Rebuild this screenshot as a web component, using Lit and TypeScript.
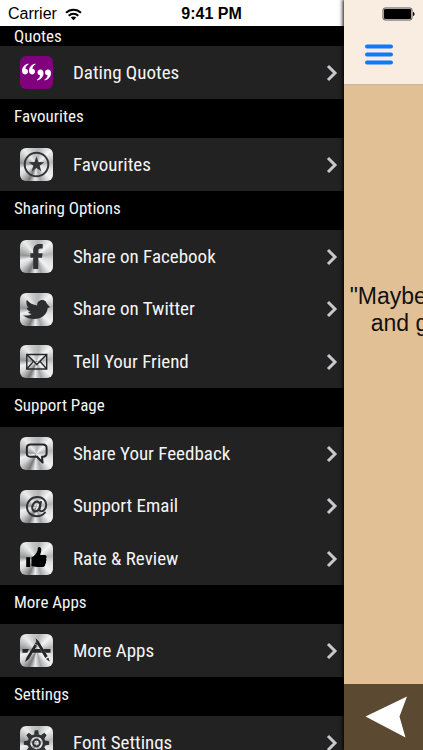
import { LitElement, html, svg, css, nothing } from "lit";
import { customElement, property } from "lit/decorators.js";

type Item = { icon: string; label: string };
type Section = { title: string; items: Item[] };

const SECTIONS: Section[] = [
  { title: "Quotes", items: [{ icon: "quotes", label: "Dating Quotes" }] },
  { title: "Favourites", items: [{ icon: "star", label: "Favourites" }] },
  {
    title: "Sharing Options",
    items: [
      { icon: "facebook", label: "Share on Facebook" },
      { icon: "twitter", label: "Share on Twitter" },
      { icon: "mail", label: "Tell Your Friend" },
    ],
  },
  {
    title: "Support Page",
    items: [
      { icon: "feedback", label: "Share Your Feedback" },
      { icon: "at", label: "Support Email" },
      { icon: "thumb", label: "Rate & Review" },
    ],
  },
  { title: "More Apps", items: [{ icon: "apps", label: "More Apps" }] },
  { title: "Settings", items: [{ icon: "gear", label: "Font Settings" }] },
];

const GEAR_ANGLES = [0, 45, 90, 135, 180, 225, 270, 315];

const GLYPHS: Record<string, unknown> = {
  quotes: svg`
    <g fill="#fff">
      <path d="M8.3 7.6C4.600 8.600 2 11.300 2 14.800C2 17 3.200 18.400 5 18.400C6.700 18.400 8 17.200 8 15.500C8 13.900 6.900 12.800 5.400 12.800C5.600 10.900 6.600 9.400 8.600 8.300Z"/>
      <path d="M15.300 7.600C11.600 8.600 9 11.300 9 14.800C9 17 10.200 18.400 12 18.400C13.700 18.400 15 17.200 15 15.500C15 13.900 13.900 12.800 12.400 12.800C12.600 10.900 13.600 9.400 15.600 8.300Z"/>
      <path d="M17.200 24.400C20.900 23.400 23.500 20.700 23.500 17.200C23.500 15 22.300 13.600 20.500 13.600C18.800 13.600 17.500 14.800 17.500 16.500C17.500 18.100 18.600 19.200 20.100 19.200C19.900 21.100 18.900 22.600 16.900 23.700Z"/>
      <path d="M24.700 24.400C28.400 23.400 31 20.700 31 17.200C31 15 29.800 13.600 28 13.600C26.300 13.600 25 14.800 25 16.500C25 18.100 26.100 19.200 27.600 19.200C27.400 21.100 26.400 22.600 24.400 23.700Z"/>
    </g>`,
  star: svg`
    <circle cx="16.500" cy="16.500" r="11.800" fill="none" stroke="#333638" stroke-width="2"/>
    <path fill="#333638" d="M16.500 8.600L18.500 14L24.300 14.200L19.700 17.700L21.300 23.200L16.500 20L11.700 23.200L13.300 17.700L8.700 14.200L14.500 14Z"/>`,
  facebook: svg`
    <path fill="#303234" d="M13.200 29V17.700H10.400V13.300H13.200V10.400C13.200 6.300 15.600 4 19.400 4H22.700V8.500H20.500C18.900 8.500 18.300 9.200 18.300 10.700V13.300H22.600L22 17.700H18.300V29Z"/>`,
  twitter: svg`
    <path fill="#2b2d2f" d="M6.800 6.700C9.500 10 13 12 17.200 12.400C16.900 9.200 19.200 6.900 22.200 6.900C23.700 6.900 25 7.500 25.900 8.500L26.800 10.500L30 14.200L27.700 15C27.200 21.500 21.500 26 14.500 26C10 26 6.400 25 3 22.200C6.800 22.900 9.500 22.500 11.700 21C9.400 20.800 8.800 20 8.200 18.700L10.400 18.600C8 17.700 7 16.500 6.600 14.600L8.500 14.900C6.700 13 5.700 9.500 6.800 6.700Z"/>`,
  mail: svg`
    <g fill="none" stroke="#242628" stroke-width="1.400">
      <path d="M6.800 9.500H26.700V24H6.800Z"/>
      <path d="M6.800 9.500L16.800 19.400L26.700 9.500"/>
      <path d="M6.800 24L13.500 16.400M26.700 24L20 16.400"/>
    </g>`,
  feedback: svg`
    <path fill="none" stroke="#242628" stroke-width="2" stroke-linejoin="round" d="M10.500 7.500H22.800C25.600 7.500 26.600 8.800 26.600 11V16.300C26.600 18.600 25.400 19.700 23 19.700H22L22.600 25.500L17 19.700H10.500C7.900 19.700 6.800 18.600 6.800 16.300V11C6.800 8.700 8 7.500 10.500 7.500Z"/>`,
  at: svg`
    <g fill="none" stroke="#303234" stroke-linecap="round">
      <path stroke-width="2" d="M24.900 22.600C22.800 25 20 26.200 16.600 26.200C10.800 26.200 7 22.300 7 17C7 11.300 11.300 7.100 17.300 7.100C22.700 7.100 26.200 10.400 26.200 14.700C26.200 18.500 23.900 21.200 21.400 21.200C19.700 21.200 19.200 20.100 19.600 18.300L21 11.900"/>
      <ellipse cx="16.200" cy="16.500" rx="3.700" ry="5" transform="rotate(22 16.200 16.500)" stroke-width="2.200"/>
    </g>`,
  thumb: svg`
    <path fill="#000" d="M6.200 15.200H10.200V25H6.200ZM11.400 15.500C14.500 14 16.700 11.500 17.500 8.500C17.700 6.500 18 4.900 19 4.900C21.200 4.900 21.600 7.200 21 9.700L20.200 13H24.700C26.200 13 26.700 14 26.600 15.100C26.500 16 26 16.400 26 16.400C26.800 17.300 26.600 18.600 25.900 19.300C26.400 20.400 26 21.400 25.200 22C25.400 23.800 24.500 24.900 22.600 24.900H17C14.700 24.900 13.500 24 11.400 23.900Z"/>`,
  apps: svg`
    <g fill="#242628">
      <path d="M2.500 15H8.900L7.300 18.800H2.500ZM13.600 15H20L22 18.800H11.400ZM23.400 15H30.500V18.800H25.500Z"/>
      <path d="M14.600 10.300L16.900 11.700L8.900 25.100L5 28L6.500 23.500Z"/>
      <path d="M15.500 4.300L18.700 7.300L27.700 22.300L25.200 23.900L16.500 8.700ZM26 25L28.400 23.700L29.800 27.800Z"/>
      <path d="M14.900 9.500L15.700 8.200L18 9.700L17.200 11Z"/>
    </g>`,
  gear: svg`
    <g fill="#303234">
      ${GEAR_ANGLES.map(
        (a) => svg`<path transform="rotate(${a} 16.500 17)" d="M14.100 8.500L14.800 4.300H18.200L18.900 8.500Z"/>`
      )}
    </g>
    <circle cx="16.500" cy="17" r="7.700" fill="none" stroke="#303234" stroke-width="2.800"/>
    <circle cx="16.500" cy="17" r="3.400" fill="none" stroke="#303234" stroke-width="2"/>`,
};

@customElement("menu-row")
class MenuRow extends LitElement {
  @property() icon = "";
  @property() label = "";

  static styles = css`
    :host {
      display: block;
    }
    .row {
      display: flex;
      align-items: center;
      width: 100%;
      height: 100%;
      padding: 0 6px 0 20px;
      border: 0;
      background: #222;
      color: #f4f4f4;
      font: 19px/24px "Roboto Condensed", "Liberation Sans Narrow", "Liberation Sans", sans-serif;
      text-align: left;
      cursor: pointer;
    }
    .tile {
      flex: none;
      width: 33px;
      height: 33px;
      margin-right: 20px;
      border-radius: 6px;
      background: conic-gradient(
        from 10deg,
        #b4b6b8, #f4f4f4 35deg, #b4b6b8 70deg, #dedfe0 95deg, #f2f2f2 125deg,
        #a2a4a6 155deg, #ececec 175deg, #77797b 195deg, #d8d8d8 225deg,
        #f0f0f0 245deg, #929496 265deg, #ececec 310deg, #c4c6c8 335deg, #b4b6b8
      );
    }
    .purple {
      background: #80007e;
    }
    .glyph {
      display: block;
    }
    .label {
      flex: 1;
      white-space: nowrap;
    }
  `;

  render() {
    return html`<button class="row" type="button">
      <span class="tile ${this.icon === "quotes" ? "purple" : ""}">
        <svg class="glyph" width="33" height="33" viewBox="0 0 33 33" aria-hidden="true">
          ${GLYPHS[this.icon] ?? nothing}
        </svg>
      </span>
      <span class="label">${this.label}</span>
      <svg width="12" height="18" viewBox="0 0 12 18" aria-hidden="true">
        <path d="M2 2L9 9L2 16" fill="none" stroke="#c9c9cc" stroke-width="3" />
      </svg>
    </button>`;
  }
}

@customElement("app-root")
class AppRoot extends LitElement {
  static styles = css`
    :host {
      display: block;
      font-family: "Liberation Sans", sans-serif;
    }
    .screen {
      position: relative;
      display: flex;
      height: 100vh;
      overflow: hidden;
      background: #000;
    }
    .status {
      position: absolute;
      z-index: 2;
      inset: 0 0 auto 0;
      display: grid;
      grid-template-columns: 1fr auto 1fr;
      align-items: center;
      height: 28px;
      padding: 0 8px;
      color: #000;
      font-size: 16px;
      line-height: 28px;
    }
    .carrier {
      display: flex;
      align-items: center;
      gap: 8px;
    }
    .time {
      font-weight: bold;
    }
    .battery {
      justify-self: end;
    }
    .drawer {
      display: flex;
      flex-direction: column;
      width: 81.25%;
      flex: none;
    }
    .strip {
      flex: none;
      height: 26px;
      background: #fff;
    }
    .menu {
      flex: 1;
      min-height: 0;
      overflow: hidden;
    }
    .title {
      height: 39px;
      margin: 0;
      padding: 7px 14px 0;
      box-sizing: border-box;
      color: #f4f4f4;
      font: 17px/20px "Roboto Condensed", "Liberation Sans Narrow", "Liberation Sans", sans-serif;
    }
    .group:first-child .title {
      height: 20px;
      padding-top: 0;
    }
    .entry {
      height: 53px;
    }
    .entry:nth-of-type(2) {
      height: 52px;
    }
    .panel {
      position: relative;
      flex: 1;
      min-width: 0;
      display: flex;
      flex-direction: column;
      background: #e2c096;
      box-shadow: 0 0 4px 1px #000;
    }
    .bar {
      display: flex;
      align-items: center;
      height: 85px;
      padding: 26px 17px 2px;
      box-sizing: border-box;
      background: #f9ede2;
      border-bottom: 1px solid #c9b5a0;
    }
    .icon-button {
      display: flex;
      padding: 4px;
      border: 0;
      background: none;
      cursor: pointer;
    }
    .quote {
      flex: 1;
      margin: 0;
      padding: 198px 0 0 6px;
      overflow: hidden;
      white-space: nowrap;
      color: #111;
      font-size: 23px;
      line-height: 27px;
    }
    .second {
      display: block;
      padding-left: 21px;
    }
    .footer {
      display: flex;
      align-items: center;
      height: 66px;
      padding-left: 17px;
      background: #5b4932;
    }
  `;

  render() {
    return html`<div class="screen">
      <header class="status">
        <span class="carrier">
          Carrier
          <svg width="17" height="13" viewBox="0 0 17 13" aria-label="Wi-Fi">
            <g fill="none" stroke="#000" stroke-width="2">
              <path d="M1 4.800C5.200 0.700 11.800 0.700 16 4.800" />
              <path d="M3.700 7.700C6.400 5.100 10.600 5.100 13.300 7.700" />
            </g>
            <path d="M5.800 9.600C7.300 8.200 9.700 8.200 11.200 9.600L8.500 12.300Z" />
          </svg>
        </span>
        <span class="time">9:41 PM</span>
        <svg class="battery" width="33" height="14" viewBox="0 0 33 14" aria-label="Battery full">
          <rect x="1" y="1" width="29" height="12" rx="2" fill="none" stroke="#555" />
          <rect x="2" y="2" width="27" height="10" rx="1" />
          <path d="M31 5C33 5.300 33 8.700 31 9Z" />
        </svg>
      </header>
      <nav class="drawer">
        <div class="strip"></div>
        <div class="menu">
          ${SECTIONS.map(
            (s) => html`<section class="group">
              <h2 class="title">${s.title}</h2>
              ${s.items.map(
                (i) => html`<menu-row class="entry" .icon=${i.icon} .label=${i.label}></menu-row>`
              )}
            </section>`
          )}
        </div>
      </nav>
      <main class="panel">
        <div class="bar">
          <button class="icon-button" type="button" aria-label="Menu">
            <svg width="28" height="21" viewBox="0 0 28 21">
              <path d="M2 2.500H26M2 10.500H26M2 18.500H26" stroke="#0a7aff" stroke-width="4" stroke-linecap="round" />
            </svg>
          </button>
        </div>
        <p class="quote">"Maybe <span class="second">and g</span></p>
        <div class="footer">
          <button class="icon-button" type="button" aria-label="Previous quote">
            <svg width="43" height="42" viewBox="0 0 43 42">
              <path d="M0.500 20.500L42 0.500L34.500 20.500L40.500 41.500Z" fill="#fff" />
            </svg>
          </button>
        </div>
      </main>
    </div>`;
  }
}
